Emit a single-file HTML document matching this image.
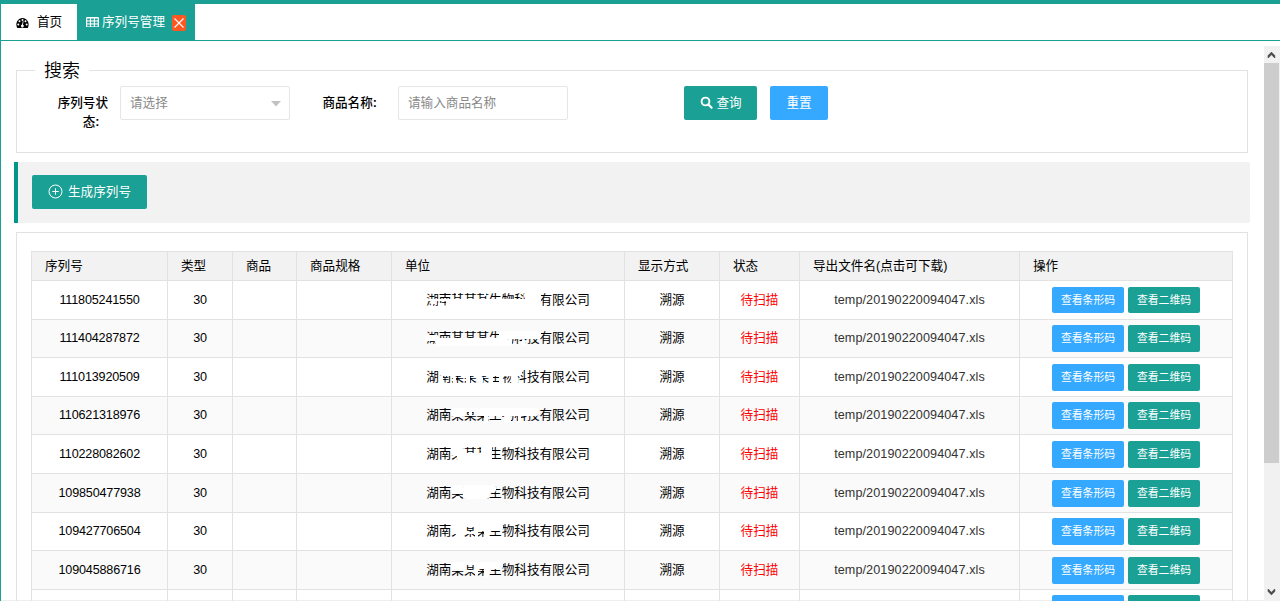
<!DOCTYPE html>
<html lang="zh-CN">
<head>
<meta charset="utf-8">
<title>序列号管理</title>
<style>
html,body{margin:0;padding:0;}
body{width:1280px;height:601px;overflow:hidden;background:#fff;position:relative;
  font-family:"Liberation Sans","Noto Sans CJK SC",sans-serif;font-size:12.6px;color:#000;}
*{box-sizing:border-box;}
.abs{position:absolute;}
#topbar{left:0;top:0;width:1280px;height:4px;background:#1AA094;}
#leftbar{left:0;top:0;width:1px;height:601px;background:#1AA094;}
#tabline{left:0;top:40px;width:1280px;height:1px;background:#1AA094;}
#tab1{left:1px;top:4px;width:76px;height:36px;background:#fff;}
#tab2{left:77px;top:4px;width:118px;height:36px;background:#1AA094;color:#fff;}
.tabtxt{position:absolute;top:0;height:36px;line-height:36px;white-space:nowrap;}
#closebtn{left:95px;top:11px;width:14px;height:16px;background:#FF5722;border-radius:2px;}
/* scrollbar */
#sbtrack{left:1264px;top:46px;width:16px;height:555px;background:#F1F1F1;}
#sbthumb{left:1264px;top:63px;width:15px;height:400px;background:#CDCDCD;}
#bottomline{left:1px;top:600px;width:1263px;height:1px;background:#EEEEEE;}
/* fieldsets */
.field{border:1px solid #E2E2E2;}
#fs1{left:16px;top:70px;width:1232px;height:83px;}
#legend{left:35px;top:56px;width:54px;height:30px;background:#fff;font-size:18px;font-weight:350;line-height:30px;text-align:center;color:#000;}
.lbl{position:absolute;font-weight:500;line-height:19px;text-align:right;color:#000;}
.inp{position:absolute;height:34px;border:1px solid #E6E6E6;border-radius:2px;background:#fff;color:#8a8a8a;line-height:32px;padding-left:9px;}
.btn{position:absolute;color:#fff;border-radius:2px;text-align:center;white-space:nowrap;}
.teal{background:#1AA094;}
.blue{background:#35A9FF;}
#quote{left:14px;top:162px;width:1236px;height:61px;background:#F2F2F2;border-left:4px solid #009688;border-radius:0 2px 2px 0;}
#fs2{left:16px;top:232px;width:1232px;height:400px;border-bottom:none;}
/* table */
#tbl{left:31px;top:251px;width:1202px;height:360px;}
.hl{position:absolute;left:0;width:1202px;height:1px;background:#E2E2E2;}
.vl{position:absolute;top:0;width:1px;height:360px;background:#E2E2E2;}
.row{position:absolute;left:1px;width:1200px;}
.row.even{background:#FAFAFA;}
.row.head{background:#F2F2F2;}
.c{position:absolute;top:0;height:100%;text-align:center;white-space:nowrap;}
.head .c{text-align:left;padding-left:13px;}
.red{color:#FF0000;}
.file{color:#333;letter-spacing:0.1px;}
.num{letter-spacing:-0.17px;}
.co{position:relative;display:inline-block;vertical-align:top;height:100%;}
.co i{position:absolute;background:#fff;display:block;}
.sbtn{position:absolute;height:26px;width:72px;line-height:26px;font-size:10.8px;color:#fff;border-radius:2px;text-align:center;}
</style>
</head>
<body>
<div id="topbar" class="abs"></div>
<div id="leftbar" class="abs"></div>
<div id="tabline" class="abs"></div>

<div id="tab1" class="abs">
  <svg class="abs" style="left:14px;top:13px" width="15" height="12" viewBox="0 0 15 12">
    <path d="M7.5 1 A6.6 6.6 0 0 0 2.3 11 L12.7 11 A6.6 6.6 0 0 0 7.5 1 Z" fill="#000"/>
    <circle cx="3.3" cy="7.6" r="1" fill="#fff"/>
    <circle cx="4.5" cy="4.3" r="1" fill="#fff"/>
    <circle cx="7.5" cy="3" r="1" fill="#fff"/>
    <circle cx="10.5" cy="4.3" r="1" fill="#fff"/>
    <circle cx="11.7" cy="7.6" r="1" fill="#fff"/>
    <path d="M8.5 4.2 L8 7.7 A1.4 1.4 0 1 1 7.1 7.6 L7.9 4.1 Z" fill="#fff"/>
  </svg>
  <span class="tabtxt" style="left:36px;">首页</span>
</div>

<div id="tab2" class="abs">
  <svg class="abs" style="left:8.5px;top:12.75px" width="13" height="10.5" viewBox="0 0 13 10.5">
    <rect x="0" y="0" width="13" height="10.5" rx="1.2" fill="#fff"/><rect x="1.2" y="1.5" width="2.7" height="1.9" fill="#1AA094"/><rect x="5.1" y="1.5" width="2.7" height="1.9" fill="#1AA094"/><rect x="9.0" y="1.5" width="2.7" height="1.9" fill="#1AA094"/><rect x="1.2" y="4.5" width="2.7" height="1.9" fill="#1AA094"/><rect x="5.1" y="4.5" width="2.7" height="1.9" fill="#1AA094"/><rect x="9.0" y="4.5" width="2.7" height="1.9" fill="#1AA094"/><rect x="1.2" y="7.5" width="2.7" height="1.9" fill="#1AA094"/><rect x="5.1" y="7.5" width="2.7" height="1.9" fill="#1AA094"/><rect x="9.0" y="7.5" width="2.7" height="1.9" fill="#1AA094"/>
  </svg>
  <span class="tabtxt" style="left:25px;">序列号管理</span>
  <div id="closebtn" class="abs">
    <svg class="abs" style="left:0;top:0" width="14" height="16" viewBox="0 0 14 16">
      <path d="M2.5 3.5L11.5 12.5M11.5 3.5L2.5 12.5" stroke="#fff" stroke-width="1.1" fill="none"/>
    </svg>
  </div>
</div>

<div id="sbtrack" class="abs"></div>
<div id="sbthumb" class="abs"></div>
<svg class="abs" style="left:1264px;top:46px" width="16" height="17" viewBox="0 0 16 17">
  <path d="M7.45 5.8L11.2 9.55V11.9H10.3L7.45 9.1L4.6 11.9H3.7V9.55Z" fill="#505050"/>
</svg>
<svg class="abs" style="left:1264px;top:583px" width="16" height="17" viewBox="0 0 16 17">
  <path d="M7.45 12.2L11.2 8.45V6.1H10.3L7.45 8.9L4.6 6.1H3.7V8.45Z" fill="#505050"/>
</svg>
<div id="bottomline" class="abs"></div>

<!-- search fieldset -->
<div id="fs1" class="abs field"></div>
<div id="legend" class="abs">搜索</div>
<div class="lbl" style="left:44px;top:93.6px;width:64px;">序列号状<br><span style="padding-right:8.5px">态<b>:</b></span></div>
<div class="inp" style="left:120px;top:86px;width:170px;">请选择
  <svg class="abs" style="right:8px;top:14px" width="10" height="6" viewBox="0 0 10 6"><path d="M0 0H10L5 5.5Z" fill="#C2C2C2"/></svg>
</div>
<div class="lbl" style="left:299px;top:93.6px;width:78px;">商品名称<b>:</b></div>
<div class="inp" style="left:398px;top:86px;width:170px;">请输入商品名称</div>
<div class="btn teal" style="left:684px;top:86px;width:73px;height:34px;line-height:34px;">
  <svg class="abs" style="left:16px;top:9.6px" width="14" height="14" viewBox="0 0 14 14"><circle cx="5.5" cy="5.5" r="3.9" stroke="#fff" stroke-width="1.9" fill="none"/><path d="M8.4 8.4L11.6 11.7" stroke="#fff" stroke-width="2.2" stroke-linecap="round"/></svg>
  <span class="abs" style="left:32.4px;top:0;">查询</span>
</div>
<div class="btn blue" style="left:770px;top:86px;width:58px;height:34px;line-height:34px;">重置</div>

<!-- toolbar -->
<div id="quote" class="abs"></div>
<div class="btn teal" style="left:32px;top:175px;width:115px;height:34px;line-height:34px;">
  <svg class="abs" style="left:16.4px;top:9.2px" width="15" height="15" viewBox="0 0 15 15"><circle cx="7.5" cy="7.5" r="6.5" stroke="#fff" stroke-width="1" fill="none"/><path d="M7.5 4.3V10.7M4.3 7.5H10.7" stroke="#fff" stroke-width="1"/></svg>
  <span class="abs" style="left:36px;top:0;">生成序列号</span>
</div>

<!-- table fieldset -->
<div id="fs2" class="abs field"></div>
<div id="tbl" class="abs">
<div class="row head" style="top:1px;height:28px;line-height:28px;">
<div class="c" style="left:0px;width:135px;">序列号</div>
<div class="c" style="left:136px;width:64px;">类型</div>
<div class="c" style="left:201px;width:63px;">商品</div>
<div class="c" style="left:265px;width:94px;">商品规格</div>
<div class="c" style="left:360px;width:232px;">单位</div>
<div class="c" style="left:593px;width:94px;">显示方式</div>
<div class="c" style="left:688px;width:79px;">状态</div>
<div class="c" style="left:768px;width:219px;">导出文件名(点击可下载)</div>
<div class="c" style="left:988px;width:212px;">操作</div>
</div>
<div class="row" style="top:30px;height:38px;line-height:38px;">
<div class="c" style="left:0px;width:135px;"><span class="num">111805241550</span></div>
<div class="c" style="left:136px;width:64px;"><span class="num">30</span></div>
<div class="c" style="left:201px;width:63px;"></div>
<div class="c" style="left:265px;width:94px;"></div>
<div class="c" style="left:360px;width:232px;"><span class="co">湖南某某某生物科技有限公司<i style="left:-1px;top:17.7px;width:116px;height:2.8px;border-radius:0px"></i><i style="left:20px;top:20.3px;width:95px;height:5.5px;border-radius:2px"></i><i style="left:4px;top:20.3px;width:6px;height:3px;border-radius:1px"></i><i style="left:12px;top:22px;width:6px;height:4px;border-radius:1px"></i><i style="left:98px;top:11px;width:17px;height:7px;border-radius:3px"></i><i style="left:30px;top:12px;width:2px;height:3px;border-radius:0px"></i><i style="left:58px;top:12px;width:2px;height:3px;border-radius:0px"></i></span></div>
<div class="c" style="left:593px;width:94px;">溯源</div>
<div class="c" style="left:688px;width:79px;"><span class="red">待扫描</span></div>
<div class="c" style="left:768px;width:219px;"><span class="file">temp/20190220094047.xls</span></div>
<div class="c" style="left:988px;width:212px;"><div class="sbtn blue" style="left:32px;top:6px;height:26px;line-height:26px;">查看条形码</div><div class="sbtn teal" style="left:108px;top:6px;height:26px;line-height:26px;">查看二维码</div></div>
</div>
<div class="row even" style="top:69px;height:37px;line-height:37px;">
<div class="c" style="left:0px;width:135px;"><span class="num">111404287872</span></div>
<div class="c" style="left:136px;width:64px;"><span class="num">30</span></div>
<div class="c" style="left:201px;width:63px;"></div>
<div class="c" style="left:265px;width:94px;"></div>
<div class="c" style="left:360px;width:232px;"><span class="co">湖南某某某生物科技有限公司<i style="left:10px;top:17.7px;width:72px;height:8px;border-radius:2px"></i><i style="left:-1px;top:15px;width:14px;height:5.5px;border-radius:2px"></i><i style="left:73px;top:10.5px;width:42px;height:8.5px;border-radius:3px"></i><i style="left:82px;top:19px;width:4px;height:7px;border-radius:1px"></i><i style="left:96px;top:19px;width:3px;height:7px;border-radius:1px"></i></span></div>
<div class="c" style="left:593px;width:94px;">溯源</div>
<div class="c" style="left:688px;width:79px;"><span class="red">待扫描</span></div>
<div class="c" style="left:768px;width:219px;"><span class="file">temp/20190220094047.xls</span></div>
<div class="c" style="left:988px;width:212px;"><div class="sbtn blue" style="left:32px;top:5px;height:27px;line-height:27px;">查看条形码</div><div class="sbtn teal" style="left:108px;top:5px;height:27px;line-height:27px;">查看二维码</div></div>
</div>
<div class="row" style="top:107px;height:38px;line-height:38px;">
<div class="c" style="left:0px;width:135px;"><span class="num">111013920509</span></div>
<div class="c" style="left:136px;width:64px;"><span class="num">30</span></div>
<div class="c" style="left:201px;width:63px;"></div>
<div class="c" style="left:265px;width:94px;"></div>
<div class="c" style="left:360px;width:232px;"><span class="co">湖南某某某生物科技有限公司<i style="left:13px;top:11px;width:83px;height:7px;border-radius:3px"></i><i style="left:13px;top:18px;width:4px;height:8px;border-radius:1px"></i><i style="left:27px;top:18px;width:3px;height:8px;border-radius:1px"></i><i style="left:40px;top:17px;width:4px;height:9px;border-radius:1px"></i><i style="left:51px;top:18px;width:6px;height:8px;border-radius:2px"></i><i style="left:63px;top:17px;width:4px;height:9px;border-radius:1px"></i><i style="left:73px;top:18px;width:4px;height:8px;border-radius:1px"></i><i style="left:85px;top:17px;width:7px;height:9px;border-radius:2px"></i></span></div>
<div class="c" style="left:593px;width:94px;">溯源</div>
<div class="c" style="left:688px;width:79px;"><span class="red">待扫描</span></div>
<div class="c" style="left:768px;width:219px;"><span class="file">temp/20190220094047.xls</span></div>
<div class="c" style="left:988px;width:212px;"><div class="sbtn blue" style="left:32px;top:6px;height:27px;line-height:27px;">查看条形码</div><div class="sbtn teal" style="left:108px;top:6px;height:27px;line-height:27px;">查看二维码</div></div>
</div>
<div class="row even" style="top:146px;height:37px;line-height:37px;">
<div class="c" style="left:0px;width:135px;"><span class="num">110621318976</span></div>
<div class="c" style="left:136px;width:64px;"><span class="num">30</span></div>
<div class="c" style="left:201px;width:63px;"></div>
<div class="c" style="left:265px;width:94px;"></div>
<div class="c" style="left:360px;width:232px;"><span class="co">湖南某某某生物科技有限公司<i style="left:25px;top:11px;width:14px;height:9px;border-radius:3px"></i><i style="left:38px;top:11px;width:14px;height:3.5px;border-radius:1px"></i><i style="left:43px;top:14px;width:3px;height:5px;border-radius:1px"></i><i style="left:51px;top:11px;width:62px;height:7.5px;border-radius:3px"></i><i style="left:58px;top:18px;width:4px;height:8px;border-radius:1px"></i><i style="left:78px;top:18px;width:7px;height:8px;border-radius:2px"></i><i style="left:92px;top:18px;width:3px;height:8px;border-radius:1px"></i></span></div>
<div class="c" style="left:593px;width:94px;">溯源</div>
<div class="c" style="left:688px;width:79px;"><span class="red">待扫描</span></div>
<div class="c" style="left:768px;width:219px;"><span class="file">temp/20190220094047.xls</span></div>
<div class="c" style="left:988px;width:212px;"><div class="sbtn blue" style="left:32px;top:5px;height:27px;line-height:27px;">查看条形码</div><div class="sbtn teal" style="left:108px;top:5px;height:27px;line-height:27px;">查看二维码</div></div>
</div>
<div class="row" style="top:184px;height:38px;line-height:38px;">
<div class="c" style="left:0px;width:135px;"><span class="num">110228082602</span></div>
<div class="c" style="left:136px;width:64px;"><span class="num">30</span></div>
<div class="c" style="left:201px;width:63px;"></div>
<div class="c" style="left:265px;width:94px;"></div>
<div class="c" style="left:360px;width:232px;"><span class="co">湖南某某某生物科技有限公司<i style="left:25px;top:11px;width:12px;height:10px;border-radius:3px"></i><i style="left:31px;top:18px;width:35px;height:8px;border-radius:2px"></i><i style="left:55px;top:11px;width:11px;height:8px;border-radius:3px"></i><i style="left:60px;top:15px;width:4px;height:6px;border-radius:1px"></i></span></div>
<div class="c" style="left:593px;width:94px;">溯源</div>
<div class="c" style="left:688px;width:79px;"><span class="red">待扫描</span></div>
<div class="c" style="left:768px;width:219px;"><span class="file">temp/20190220094047.xls</span></div>
<div class="c" style="left:988px;width:212px;"><div class="sbtn blue" style="left:32px;top:6px;height:27px;line-height:27px;">查看条形码</div><div class="sbtn teal" style="left:108px;top:6px;height:27px;line-height:27px;">查看二维码</div></div>
</div>
<div class="row even" style="top:223px;height:38px;line-height:38px;">
<div class="c" style="left:0px;width:135px;"><span class="num">109850477938</span></div>
<div class="c" style="left:136px;width:64px;"><span class="num">30</span></div>
<div class="c" style="left:201px;width:63px;"></div>
<div class="c" style="left:265px;width:94px;"></div>
<div class="c" style="left:360px;width:232px;"><span class="co">湖南某某某生物科技有限公司<i style="left:25px;top:11px;width:12px;height:8.5px;border-radius:3px"></i><i style="left:37px;top:11px;width:26px;height:14px;border-radius:3px"></i><i style="left:61px;top:11px;width:9px;height:6.5px;border-radius:2px"></i><i style="left:30px;top:22px;width:4px;height:3px;border-radius:1px"></i></span></div>
<div class="c" style="left:593px;width:94px;">溯源</div>
<div class="c" style="left:688px;width:79px;"><span class="red">待扫描</span></div>
<div class="c" style="left:768px;width:219px;"><span class="file">temp/20190220094047.xls</span></div>
<div class="c" style="left:988px;width:212px;"><div class="sbtn blue" style="left:32px;top:6px;height:27px;line-height:27px;">查看条形码</div><div class="sbtn teal" style="left:108px;top:6px;height:27px;line-height:27px;">查看二维码</div></div>
</div>
<div class="row" style="top:262px;height:37px;line-height:37px;">
<div class="c" style="left:0px;width:135px;"><span class="num">109427706504</span></div>
<div class="c" style="left:136px;width:64px;"><span class="num">30</span></div>
<div class="c" style="left:201px;width:63px;"></div>
<div class="c" style="left:265px;width:94px;"></div>
<div class="c" style="left:360px;width:232px;"><span class="co">湖南某某某生物科技有限公司<i style="left:25px;top:11px;width:14px;height:10px;border-radius:3px"></i><i style="left:30px;top:20px;width:8px;height:6px;border-radius:2px"></i><i style="left:38px;top:11px;width:14px;height:3px;border-radius:1px"></i><i style="left:38px;top:18.5px;width:14px;height:2px;border-radius:0px"></i><i style="left:51px;top:11px;width:26px;height:7px;border-radius:3px"></i><i style="left:58px;top:18px;width:5px;height:8px;border-radius:1px"></i><i style="left:49px;top:15px;width:3px;height:10px;border-radius:1px"></i></span></div>
<div class="c" style="left:593px;width:94px;">溯源</div>
<div class="c" style="left:688px;width:79px;"><span class="red">待扫描</span></div>
<div class="c" style="left:768px;width:219px;"><span class="file">temp/20190220094047.xls</span></div>
<div class="c" style="left:988px;width:212px;"><div class="sbtn blue" style="left:32px;top:5px;height:27px;line-height:27px;">查看条形码</div><div class="sbtn teal" style="left:108px;top:5px;height:27px;line-height:27px;">查看二维码</div></div>
</div>
<div class="row even" style="top:300px;height:38px;line-height:38px;">
<div class="c" style="left:0px;width:135px;"><span class="num">109045886716</span></div>
<div class="c" style="left:136px;width:64px;"><span class="num">30</span></div>
<div class="c" style="left:201px;width:63px;"></div>
<div class="c" style="left:265px;width:94px;"></div>
<div class="c" style="left:360px;width:232px;"><span class="co">湖南某某某生物科技有限公司<i style="left:25px;top:11px;width:14px;height:9px;border-radius:3px"></i><i style="left:38px;top:11px;width:14px;height:3px;border-radius:1px"></i><i style="left:38px;top:18.5px;width:14px;height:2px;border-radius:0px"></i><i style="left:51px;top:11px;width:26px;height:6.5px;border-radius:3px"></i><i style="left:58px;top:17px;width:5px;height:9px;border-radius:1px"></i><i style="left:49px;top:15px;width:3px;height:10px;border-radius:1px"></i></span></div>
<div class="c" style="left:593px;width:94px;">溯源</div>
<div class="c" style="left:688px;width:79px;"><span class="red">待扫描</span></div>
<div class="c" style="left:768px;width:219px;"><span class="file">temp/20190220094047.xls</span></div>
<div class="c" style="left:988px;width:212px;"><div class="sbtn blue" style="left:32px;top:6px;height:27px;line-height:27px;">查看条形码</div><div class="sbtn teal" style="left:108px;top:6px;height:27px;line-height:27px;">查看二维码</div></div>
</div>
<div class="row" style="top:339px;height:38px;line-height:38px;">
<div class="c" style="left:0px;width:135px;"><span class="num"></span></div>
<div class="c" style="left:136px;width:64px;"><span class="num">30</span></div>
<div class="c" style="left:201px;width:63px;"></div>
<div class="c" style="left:265px;width:94px;"></div>
<div class="c" style="left:360px;width:232px;"><span class="co">湖南某某某生物科技有限公司</span></div>
<div class="c" style="left:593px;width:94px;">溯源</div>
<div class="c" style="left:688px;width:79px;"><span class="red">待扫描</span></div>
<div class="c" style="left:768px;width:219px;"><span class="file">temp/20190220094047.xls</span></div>
<div class="c" style="left:988px;width:212px;"><div class="sbtn blue" style="left:32px;top:5px;height:27px;line-height:27px;">查看条形码</div><div class="sbtn teal" style="left:108px;top:5px;height:27px;line-height:27px;">查看二维码</div></div>
</div>
<div class="hl" style="top:0px"></div>
<div class="hl" style="top:29px"></div>
<div class="hl" style="top:68px"></div>
<div class="hl" style="top:106px"></div>
<div class="hl" style="top:145px"></div>
<div class="hl" style="top:183px"></div>
<div class="hl" style="top:222px"></div>
<div class="hl" style="top:261px"></div>
<div class="hl" style="top:299px"></div>
<div class="hl" style="top:338px"></div>
<div class="vl" style="left:0px"></div>
<div class="vl" style="left:136px"></div>
<div class="vl" style="left:201px"></div>
<div class="vl" style="left:265px"></div>
<div class="vl" style="left:360px"></div>
<div class="vl" style="left:593px"></div>
<div class="vl" style="left:688px"></div>
<div class="vl" style="left:768px"></div>
<div class="vl" style="left:988px"></div>
<div class="vl" style="left:1201px"></div>
</div>
</body>
</html>
